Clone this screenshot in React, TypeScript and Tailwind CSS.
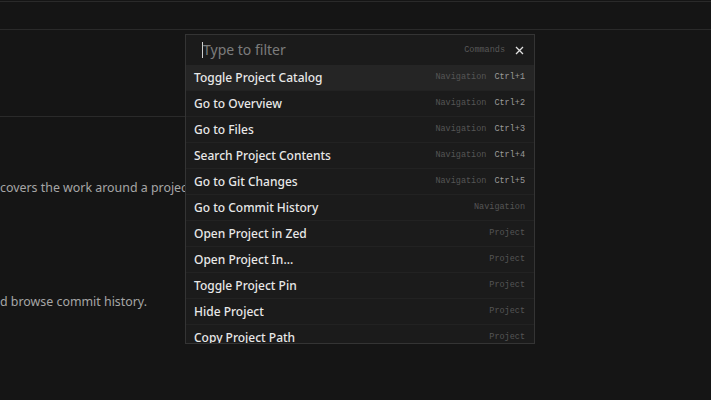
const commands = [
  { label: "Toggle Project Catalog", group: "Navigation", key: "Ctrl+1" },
  { label: "Go to Overview", group: "Navigation", key: "Ctrl+2" },
  { label: "Go to Files", group: "Navigation", key: "Ctrl+3" },
  { label: "Search Project Contents", group: "Navigation", key: "Ctrl+4" },
  { label: "Go to Git Changes", group: "Navigation", key: "Ctrl+5" },
  { label: "Go to Commit History", group: "Navigation" },
  { label: "Open Project in Zed", group: "Project" },
  { label: "Open Project In...", group: "Project" },
  { label: "Toggle Project Pin", group: "Project" },
  { label: "Hide Project", group: "Project" },
  { label: "Copy Project Path", group: "Project" },
];

const sans = "font-['Noto_Sans',sans-serif]";
const mono = "font-['Liberation_Mono',monospace]";

const App = () => {
  return (
    <div className={`relative w-[711px] h-[400px] overflow-hidden bg-[#151515] ${sans}`}>
      {/* page behind the palette */}
      <div className="h-px" />
      <div className="h-[28px] border-t border-[#2a2a2a]" />
      <div className="h-[87px] border-t border-[#2a2a2a]" />
      <div className="w-[186px] overflow-hidden border-t border-[#2a2a2a] pt-[62px] text-[12.4px] text-[#a6a6a6]">
        <p className="whitespace-nowrap leading-[18px]">covers the work around a project</p>
        <p className="mt-[96px] whitespace-nowrap leading-[18px]">d browse commit history.</p>
      </div>

      {/* command palette */}
      <div className="absolute left-[185px] top-[34px] w-[350px] h-[310px] overflow-hidden border border-[#343434] bg-[#1b1b1b] flex flex-col">
        <div className="h-[30px] shrink-0 flex items-center pl-[16px] pr-[10px]">
          <div className="w-px h-[16px] bg-[#d0d0d0]" />
          <span className="flex-1 text-[14px] text-[#7c7c7c] leading-none">Type to filter</span>
          <span className={`${mono} text-[8.5px] text-[#585858] mr-[10px]`}>Commands</span>
          <svg width="9" height="9" viewBox="0 0 9 9" className="text-[#e0e0e0]">
            <path d="M1 1L8 8M8 1L1 8" stroke="currentColor" strokeWidth="1.3" />
          </svg>
        </div>
        {commands.map((c, i) => (
          <div
            key={c.label}
            className={`h-[26px] shrink-0 flex items-center pl-[8px] pr-[9px] border-b border-[#222] ${
              i === 0 ? "bg-[#252525]" : ""
            }`}
          >
            <span className="flex-1 text-[12px] font-medium text-[#e8e8e8] leading-none">
              {c.label}
            </span>
            <span className={`${mono} text-[8.5px] text-[#555]`}>{c.group}</span>
            {c.key && (
              <span className={`${mono} text-[8.5px] text-[#9a9a9a] ml-[8px]`}>{c.key}</span>
            )}
          </div>
        ))}
      </div>
    </div>
  );
};

export default App;
